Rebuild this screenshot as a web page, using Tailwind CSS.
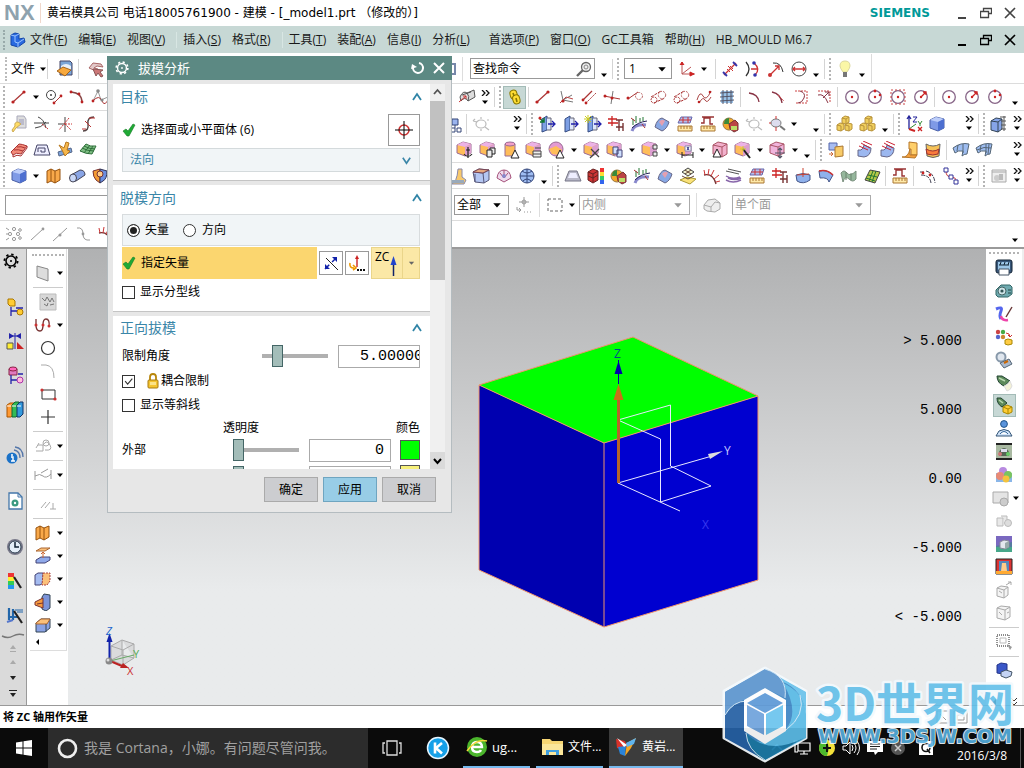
<!DOCTYPE html>
<html lang="zh-CN">
<head>
<meta charset="utf-8">
<title>NX - 建模 - _model1.prt</title>
<script src="https://cdn.jsdelivr.net/npm/@tailwindcss/browser@4"></script>
</head>
<body class="h-screen overflow-hidden flex flex-col bg-white text-black text-[12px] leading-4 font-['Open_Sans','Noto_Sans_CJK_SC',sans-serif] relative">

<svg class="hidden" aria-hidden="true">
<!-- sketch curves -->
<symbol id="line" viewBox="0 0 18 18"><path d="M3 14 14 4" stroke="#a33" fill="none" stroke-width="1.2"/><circle cx="3" cy="14" r="1.6" fill="#b22"/><circle cx="14" cy="4" r="1.6" fill="#b22"/></symbol>
<symbol id="circline" viewBox="0 0 18 18"><circle cx="6" cy="7" r="4.5" fill="none" stroke="#444"/><circle cx="6" cy="7" r="1" fill="#444"/><path d="M9 15 16 8" stroke="#a33"/><circle cx="9" cy="15" r="1.4" fill="#b22"/><circle cx="16" cy="8" r="1.4" fill="#b22"/></symbol>
<symbol id="arc" viewBox="0 0 18 18"><path d="M3 4Q14 5 14 14" stroke="#844" fill="none" stroke-width="1.3"/><circle cx="3" cy="4" r="1.4" fill="#b22"/><circle cx="11" cy="6" r="1.4" fill="#b22"/><circle cx="14" cy="14" r="1.4" fill="#b22"/></symbol>
<symbol id="spline" viewBox="0 0 18 18"><path d="M2 13 7 3 10 12 17 9" stroke="#999" fill="none"/><path d="M2 13Q8 6 11 13T18 9" stroke="#a33" fill="none"/><circle cx="7" cy="3" r="1.8" fill="#888"/><circle cx="2" cy="13" r="1.4" fill="#b22"/><circle cx="11" cy="12" r="1.6" fill="#888"/></symbol>
<symbol id="surf" viewBox="0 0 18 18"><path d="M2 9Q5 2 9 5L16 2 17 9 10 13Q7 8 3 13Z" fill="#ddd" stroke="#555"/><path d="M9 5Q12 8 10 13M4 7 13 4" stroke="#555" fill="none"/><path d="M1 14 8 8M5 8h3v3" stroke="#c33" fill="none"/></symbol>
<symbol id="chain" viewBox="0 0 18 18"><g fill="#fd3" stroke="#870"><rect x="4" y="2" width="7" height="9" rx="3.5" transform="rotate(-14 8 6)"/><rect x="7" y="7" width="7" height="9" rx="3.5" transform="rotate(-14 10 12)"/></g><path d="M7 5l1 3M10 10l1 4" stroke="#870" stroke-width="1.6"/></symbol>
<symbol id="angl" viewBox="0 0 18 18"><path d="M4 3 6 12 16 14M6 12 15 7" stroke="#777" fill="none"/><path d="M3 15 9 9 16 11" stroke="#b44" fill="none"/><circle cx="6" cy="13" r="1.6" fill="#b22"/></symbol>
<symbol id="par" viewBox="0 0 18 18"><path d="M3 12 12 3" stroke="#a33" stroke-width="1.3"/><path d="M6 15 16 5" stroke="#a33" stroke-dasharray="2 1"/><circle cx="3" cy="12" r="1.4" fill="#b22"/><circle cx="6" cy="15" r="1.4" fill="#b22"/></symbol>
<symbol id="perp" viewBox="0 0 18 18"><path d="M1 8 17 11" stroke="#a33"/><path d="M10 3 8 16" stroke="#777"/><circle cx="2" cy="8" r="1.5" fill="#b22"/><circle cx="9" cy="10" r="1.5" fill="#b22"/></symbol>
<symbol id="tan1" viewBox="0 0 18 18"><path d="M2 11 12 4" stroke="#a33"/><circle cx="13" cy="8" r="3.5" fill="none" stroke="#b66" stroke-dasharray="2 1"/><circle cx="2" cy="10" r="1.5" fill="#b22"/></symbol>
<symbol id="tan2" viewBox="0 0 18 18"><path d="M2 9 12 3M5 15 16 10" stroke="#a33" stroke-dasharray="3 1"/><circle cx="13" cy="7" r="3.7" fill="none" stroke="#b66" stroke-dasharray="2 1"/><circle cx="5" cy="12" r="3" fill="none" stroke="#a33" stroke-dasharray="2 1"/></symbol>
<symbol id="free" viewBox="0 0 18 18"><path d="M2 12Q5 2 8 8T16 3M4 15Q8 8 10 12T16 9" stroke="#a44" fill="none"/><circle cx="4" cy="14" r="1.3" fill="#b22"/><circle cx="15" cy="4" r="1.3" fill="#b22"/></symbol>
<symbol id="grid" viewBox="0 0 18 18"><path d="M3 3h12v12H3z" fill="#9bc4ea"/><path d="M5 2v14M9 2v14M13 2v14M2 5l14-1M2 9l14-1M2 13l14-1" stroke="#556" fill="none"/></symbol>
<symbol id="arcp" viewBox="0 0 18 18"><path d="M3 5Q12 6 13 14" stroke="#834" fill="none" stroke-width="1.3"/></symbol>
<symbol id="arcq" viewBox="0 0 18 18"><path d="M3 4Q12 6 13 15" stroke="#834" fill="none" stroke-width="1.3"/><path d="M9 7 15 13" stroke="#c44" stroke-dasharray="2 1"/></symbol>
<symbol id="dashc" viewBox="0 0 18 18"><path d="M3 3h12v12H3" stroke="#c44" stroke-dasharray="2 1" fill="none"/><path d="M8 3Q14 5 12 10T6 15" stroke="#834" fill="none"/></symbol>
<symbol id="dashd" viewBox="0 0 18 18"><path d="M3 3h12v12" stroke="#c44" stroke-dasharray="2 1" fill="none"/><path d="M3 7Q9 5 13 15M8 10 14 4M10 4h4v4" stroke="#834" fill="none"/></symbol>
<symbol id="ci" viewBox="0 0 18 18"><circle cx="9" cy="9" r="6.3" fill="none" stroke="#868" stroke-width="1.3"/><circle cx="9" cy="9" r="1.2" fill="#c22"/></symbol>
<symbol id="ci2" viewBox="0 0 18 18"><use href="#ci"/><circle cx="9" cy="3" r="1.4" fill="#c22"/><circle cx="14" cy="7" r="1.3" fill="#c22"/></symbol>
<symbol id="ci3" viewBox="0 0 18 18"><use href="#ci"/><path d="M2 2h14v14H2z" fill="none" stroke="#c44" stroke-dasharray="2 2"/></symbol>
<symbol id="ci4" viewBox="0 0 18 18"><use href="#ci"/><path d="M9 9 14 4M11 4h3v3" stroke="#c22" fill="none" stroke-width="1.3"/></symbol>
<symbol id="cpy" viewBox="0 0 18 18"><path d="M7 1h7l2 3v9H7z" fill="#ddd" stroke="#aab"/><path d="M9 4h5v6H9z" fill="#bbc"/><path d="M2 15 5 11Q4 7 8 7L11 9 6 13 3 17z" fill="#fd6" stroke="#ca5"/></symbol>
<symbol id="trim" viewBox="0 0 18 18"><path d="M5 2Q11 4 13 13M1 8h15M2 13Q8 13 13 7" stroke="#444" fill="none"/><path d="M9 9l6 5" stroke="#c33" stroke-dasharray="2 1"/></symbol>
<symbol id="xtrim" viewBox="0 0 18 18"><path d="M9 2v15M2 9h7" stroke="#444" fill="none"/><path d="M9 9h7M9 9l6 6M13 3 3 15" stroke="#c33" stroke-dasharray="2 1"/></symbol>
<symbol id="scrv" viewBox="0 0 18 18"><path d="M4 16Q10 16 9 9T15 2" stroke="#544" stroke-width="1.4" fill="none"/><path d="M6 6l6 6M10 3h6M3 14h4" stroke="#b33" fill="none"/></symbol>
<symbol id="greyl" viewBox="0 0 18 18"><g fill="none" stroke="#bbb" stroke-width="1.2"><ellipse cx="9" cy="9" rx="5" ry="4"/><path d="M1 6l4 1M1 6l2-2M13 12l4 3M9 2v2M9 14v2M15 5h2"/></g></symbol>
<symbol id="door" viewBox="0 0 18 18"><path d="M4 4 9 1v14l-5 2z" fill="#7d9fe4" stroke="#334a80"/><path d="M9 3h4v12H9" fill="#dde6fb" stroke="#667"/><path d="M10 9h7M14 6l3 3-3 3" stroke="#22a" fill="none" stroke-width="1.3"/></symbol>
<symbol id="doorg" viewBox="0 0 18 18"><use href="#door"/><path d="M1 3l5 4M6 3v4H2" stroke="#173" fill="none" stroke-width="1.5"/><circle cx="2" cy="3" r="1.5" fill="#c22"/></symbol>
<symbol id="doors" viewBox="0 0 18 18"><use href="#door"/><path d="M4 0v8M0 4h8M1 1l6 6M7 1 1 7" stroke="#cc2"/></symbol>
<symbol id="algn" viewBox="0 0 18 18"><path d="M1 4h9M1 8h10M5 1v10" stroke="#c22" fill="none" stroke-width="1.3"/><path d="M9 5h7M12 5v11M9 12h7M16 8v8" stroke="#733" fill="none" stroke-width="1.4"/></symbol>
<symbol id="hair" viewBox="0 0 18 18"><path d="M2 16Q4 9 16 10" stroke="#88c" stroke-width="3" fill="none"/><path d="M2 13Q8 7 17 6" stroke="#225" fill="none"/><path d="M3 10V4M6 8V1M10 7V3M13 6V2" stroke="#273"/><path d="M1 3l4 3M12 9l3 4" stroke="#a33"/></symbol>
<symbol id="blob" viewBox="0 0 18 18"><path d="M2 12Q4 4 9 3L16 7Q14 14 9 16Z" fill="#88a8e4" stroke="#668"/><path d="M6 7Q9 3 12 6L9 11Z" fill="#e4a0b0"/></symbol>
<symbol id="rul" viewBox="0 0 18 18"><path d="M2 11h14v5H2z" fill="#ffe9a8" stroke="#a73"/><path d="M5 11v3M8 11v3M11 11v3M14 11v3" stroke="#a73"/></symbol>
<symbol id="rula" viewBox="0 0 18 18"><use href="#rul"/><path d="M2 8 5 2h11l-2 6z" fill="#b4c0ee" stroke="#66a"/><path d="M3 5h12M7 2v6M12 2v6" stroke="#c33"/></symbol>
<symbol id="rulb" viewBox="0 0 18 18"><use href="#rul"/><path d="M2 8 5 8V3h6v6h3M3 2h12" stroke="#933" fill="none" stroke-width="1.4"/></symbol>
<symbol id="pac" viewBox="0 0 18 18"><circle cx="7" cy="9" r="6" fill="#f3a72b" stroke="#974"/><path d="M7 9V3Q2 3 2 9z" fill="#3a8a3a"/><path d="M7 9 13 5 16 8v7l-4 2-4-3z" fill="#b44" stroke="#733"/><path d="M9 11h6v4H9z" fill="#bd6"/></symbol>
<symbol id="zm" viewBox="0 0 18 18"><ellipse cx="8" cy="8" rx="5" ry="4" fill="#dde" stroke="#777"/><path d="M12 11l5 4" stroke="#777" stroke-width="2"/><path d="M8 1v3M8 12v4M1 8h2" stroke="#c33"/></symbol>
<symbol id="cubes" viewBox="0 0 18 18"><g fill="#f0cf5e" stroke="#b8923a"><path d="M6 3l3-2 4 1v5l-3 2-4-1z"/><path d="M1 10l3-2 4 1v5l-3 2-4-1z"/><path d="M9 10l3-2 4 1v5l-3 2-4-1z"/></g><path d="M6 3l4 1v5M10 4l3-2M1 10l4 1v5M9 10l4 1v5" stroke="#b8923a" fill="none"/></symbol>
<symbol id="axes" viewBox="0 0 18 18"><path d="M4 14V2M2 4l2-3 2 3" stroke="#229" fill="none" stroke-width="1.3"/><path d="M4 14l7-5" stroke="#383"/><path d="M4 14l6 2" stroke="#c22" stroke-width="2"/><path d="M8 2h4L8 7h4" stroke="#229" fill="none"/><path d="M13 6l2 3 2-3M15 9v2" stroke="#383" fill="none"/><path d="M13 12l4 4M17 12l-4 4" stroke="#c22" stroke-width="1.3"/></symbol>
<symbol id="bcube" viewBox="0 0 18 18"><path d="M2 5 8 2l8 2v9l-6 3-8-3z" fill="#7f9ae6" stroke="#4a5fa4"/><path d="M2 5 8 2l8 2-6 3z" fill="#bccdfa"/><path d="M10 7 16 4v9l-6 3z" fill="#4d6fd0"/></symbol>
<symbol id="bcarr" viewBox="0 0 18 18"><path d="M1 6 6 3l6 1v10l-4 3-7-2z" fill="#86a4e8" stroke="#345"/><path d="M1 6l7 1 4-3M8 7v10" stroke="#345" fill="none"/><path d="M10 2h6M11 6h5M11 10h5M11 14h5M14 1v15" stroke="#555"/></symbol>
<!-- synchronous modelling: a cube with a small badge -->
<symbol id="pc" viewBox="0 0 18 18"><path d="M1 4 7 1l8 2v9l-6 3-8-3z" fill="#ffbd59" stroke="#9a6a94"/><path d="M1 4 7 1l8 2-6 3z" fill="#ecb2e6"/><path d="M9 6 15 3v9l-6 3z" fill="#dc9ed0"/></symbol>
<symbol id="pc1" viewBox="0 0 18 18"><use href="#pc"/><path d="M12 6v11M8 13q4 5 8 0M10 9h4" stroke="#222" fill="none" stroke-width="1.2"/></symbol>
<symbol id="pc2" viewBox="0 0 18 18"><use href="#pc"/><path d="M8 9h5v7H8zM11 9V7h5v6h-3" fill="#eee" stroke="#222"/></symbol>
<symbol id="pc3" viewBox="0 0 18 18"><path d="M3 3h10v12H3z" fill="#ffbd59" stroke="#9a6a94"/><ellipse cx="8" cy="3" rx="5" ry="2" fill="#f2a0c8" stroke="#9a6a94"/><path d="M13 9l4 8H9z" fill="#fff" stroke="#222"/></symbol>
<symbol id="pc4" viewBox="0 0 18 18"><use href="#pc"/><path d="M8 10h8v6H8zM10 7h6M8 13h8" fill="#eee" stroke="#444"/></symbol>
<symbol id="pc5" viewBox="0 0 18 18"><circle cx="8" cy="8" r="7" fill="#e39ad2" stroke="#9a6a94"/><path d="M1 8l7-3 6 4-3 5-7-1z" fill="#ffbd59"/><path d="M12 9l4 8H8z" fill="#fff" stroke="#222"/></symbol>
<symbol id="pc6" viewBox="0 0 18 18"><use href="#pc"/><path d="M8 8l8 8M16 8l-9 9" stroke="#444" stroke-width="1.3"/></symbol>
<symbol id="pc7" viewBox="0 0 18 18"><use href="#pc"/><path d="M7 6h5v7H7zM11 9h5v7h-5z" fill="#cfe0ff" stroke="#447"/></symbol>
<symbol id="pc8" viewBox="0 0 18 18"><use href="#pc"/><path d="M12 4h4v4h-4zM12 11h4v4h-4z" fill="#eee" stroke="#444"/></symbol>
<symbol id="pc9" viewBox="0 0 18 18"><use href="#pc"/><path d="M6 14h11M6 11v6M17 11v6" stroke="#222" fill="none"/><path d="M9 5h6v5H9z" fill="#fff" stroke="#88a"/><path d="M11 6l2 3M13 6l-2 3" stroke="#338"/></symbol>
<symbol id="pca" viewBox="0 0 18 18"><path d="M2 4 7 1l9 2v10l-5 3-9-3z" fill="#f2b0cc" stroke="#a56"/><path d="M2 4l9 2v10M11 6l5-3" stroke="#a56" fill="none"/><path d="M6 8l4 8H2z" fill="#fff" stroke="#222"/></symbol>
<symbol id="pcb" viewBox="0 0 18 18"><use href="#pc"/><path d="M9 8l7 9" stroke="#222" stroke-width="2"/><path d="M9 5v5M6 8h6" stroke="#cc3"/></symbol>
<symbol id="pcc" viewBox="0 0 18 18"><path d="M1 4 7 1l8 2v9l-6 3-8-3z" fill="#f0b4dc" stroke="#a56"/><path d="M1 4l8 2v9M9 6l6-3" stroke="#a56" fill="none"/><path d="M11 7v10M6 12h10M9 9l2-2 2 2M9 15l2 2 2-2" stroke="#556" fill="none" stroke-width="1.2"/></symbol>
<symbol id="rsurf" viewBox="0 0 18 18"><path d="M1 11 9 3q3 0 8 2l-6 8q-5-2-8 1z" fill="#f28a78" stroke="#a33"/><path d="M3 14v2q4-3 8-1l6-8V5M4 9q4-1 9 1M7 6q4-1 8 1" stroke="#a33" fill="none"/></symbol>
<symbol id="trp" viewBox="0 0 18 18"><path d="M4 4h10l3 10H1z" fill="#eef" stroke="#446"/><path d="M5 11V7h7v4H8V9" fill="none" stroke="#446"/></symbol>
<symbol id="oarr" viewBox="0 0 18 18"><path d="M2 11 15 7l1 4-13 4z" fill="#7aa2d8" stroke="#568"/><path d="M3 4 8 7 10 1l3 1-2 7 3 1-5 5-3-6z" fill="#f5b74c" stroke="#b87820"/></symbol>
<symbol id="ggrid" viewBox="0 0 18 18"><path d="M1 10 7 3q4 3 10 2l-4 8q-6 0-12-3z" fill="#7fbf84" stroke="#2f6f3a"/><path d="M3 7q5 3 12 3M5 5q5 3 11 3M5 12l6-8M9 13l5-8" stroke="#2f6f3a" fill="none"/></symbol>
<symbol id="swap" viewBox="0 0 18 18"><path d="M2 2h8v7H2z" fill="#a8bdf2" stroke="#56a"/><path d="M8 6l8-1v10l-8 1z" fill="#f8cb68" stroke="#a73"/><path d="M2 13h4M4 11l2 2-2 2" stroke="#c63" fill="none"/></symbol>
<symbol id="sht" viewBox="0 0 18 18"><path d="M3 9q5 1 6-5l7 3q0 8-7 9l-6-1z" fill="#9cb8f0" stroke="#668"/><path d="M6 2l9 5M4 5l9 4M8 0l9 4" stroke="#c23"/></symbol>
<symbol id="fold" viewBox="0 0 18 18"><path d="M8 1l8 1v12h-6V8H8z" fill="#ffcf6a" stroke="#b5762a"/><path d="M1 16q6 1 8-8v6h7l-2 3z" fill="#f6a13c" stroke="#b5762a"/></symbol>
<symbol id="band" viewBox="0 0 18 18"><path d="M2 3q7 4 14 0l-1 12q-6 3-12 0z" fill="#f6c258" stroke="#666"/><path d="M2 8q7 4 13 0l-1 5q-5 2-11 0z" fill="#fa7b3c" stroke="#933"/></symbol>
<symbol id="bsf" viewBox="0 0 18 18"><path d="M1 7q8-6 16-4l-2 10q-3 0-5 2l1-5q-5-1-8 2z" fill="#9dbcf0" stroke="#567"/><path d="M6 4l-1 6M11 3v9" stroke="#567"/></symbol>
<symbol id="bsg" viewBox="0 0 18 18"><use href="#bsf"/><path d="M2 9q7-4 14-2M14 3l-1 10" stroke="#567" fill="none"/></symbol>
<symbol id="book" viewBox="0 0 18 18"><path d="M2 4l4-2 4 2 5-2v11l-5 3-4-2-4 2z" fill="#f9a94a" stroke="#96530f"/><path d="M6 2v12M10 4v12" stroke="#96530f"/></symbol>
<symbol id="tube" viewBox="0 0 18 18"><path d="M3 8 12 3q5 0 5 5l-9 6q-5 1-5-6z" fill="#89a5e6" stroke="#445"/><ellipse cx="5" cy="11" rx="3.5" ry="4" fill="#c9d7f7" stroke="#445"/></symbol>
<symbol id="half" viewBox="0 0 18 18"><path d="M2 4 9 2v14l-4-3q-3-3-3-9z" fill="#f49b33" stroke="#733"/><path d="M9 2l7 2q0 8-4 10l-3 2z" fill="#6c8fe0" stroke="#335"/><circle cx="9" cy="7" r="3" fill="#fc8" stroke="#733"/></symbol>
<symbol id="yf" viewBox="0 0 18 18"><path d="M9 2h4v8l4 3-2 4H2q6-1 7-15z" fill="#f8c96c" stroke="#88a"/><path d="M3 13h12v3H3z" fill="#9ab" /></symbol>
<symbol id="cedge" viewBox="0 0 18 18"><path d="M1 5l6-3 10 1v10l-5 3-9-1z" fill="#b4c6f2" stroke="#557"/><path d="M1 5l10 1 6-3M11 6l1 10M3 7v8" stroke="#557" fill="none"/><path d="M1 5l6-3 10 1-6 3z" fill="#e5a880" stroke="#745"/></symbol>
<symbol id="dome" viewBox="0 0 18 18"><path d="M2 11Q3 3 9 3t7 8l-7 4z" fill="#efdbee" stroke="#a5527a"/><path d="M9 3v8M5 6l4 5 4-5" stroke="#a5527a" fill="none"/><circle cx="9" cy="9" r="2" fill="#88c"/></symbol>
<symbol id="globe" viewBox="0 0 18 18"><circle cx="9" cy="9" r="7" fill="#9ebcf2" stroke="#347"/><path d="M2 9h14M9 2v14M4 4q5 4 10 0M5 14q4-4 8 0" stroke="#347" fill="none"/></symbol>
<symbol id="tpz" viewBox="0 0 18 18"><path d="M5 4h8l4 10H1z" fill="#b8b8c8" stroke="#778"/><path d="M6 6h6l2 5H4z" fill="#eef"/></symbol>
<symbol id="rain" viewBox="0 0 18 18"><path d="M1 5l5-3 5 2v9l-5 3-5-3z" fill="#c33" stroke="#622"/><path d="M1 5l5 2 5-3M6 7v8M1 9l5 2 5-3" stroke="#622" fill="none"/><path d="M13 1h4v4h-4z" fill="#e33"/><path d="M13 5h4v4h-4z" fill="#fd3"/><path d="M13 9h4v4h-4z" fill="#3c6"/><path d="M13 13h4v4h-4z" fill="#36e"/></symbol>
<symbol id="lay" viewBox="0 0 18 18"><path d="M1 13l7-3 9 2-6 5z" fill="#fbe27a" stroke="#a93"/><path d="M9 1l6 4-6 4-6-4z" fill="#eec" stroke="#444"/><path d="M3 9l6 3 6-3M6 3l6 4M12 3 6 7" stroke="#643" fill="none"/></symbol>
<symbol id="comb" viewBox="0 0 18 18"><path d="M2 8q9-2 12 9" stroke="#733" fill="none" stroke-width="1.3"/><path d="M3 8 2 3M6 8 7 2M9 9l3-6M12 12l5-4M14 15l4-1" stroke="#c33"/></symbol>
<symbol id="strp" viewBox="0 0 18 18"><path d="M1 4l13 3M3 2l13 3" stroke="#555"/><path d="M1 9q6 4 14 1M1 13q7 4 15 0M3 11q7 3 13 0" stroke="#86a" fill="none" stroke-width="1.5"/></symbol>
<symbol id="cup" viewBox="0 0 18 18"><path d="M2 8q7-3 14 0v5q-7 5-13 1z" fill="#8fb1ec" stroke="#458"/><path d="M9 1v9M3 8l12-1" stroke="#c43" fill="none"/></symbol>
<symbol id="bfold" viewBox="0 0 18 18"><path d="M2 4q8-2 14 4l-4 7q-1-5-9-4z" fill="#8fb1ec" stroke="#458"/><path d="M2 4q8-2 14 4" stroke="#c33" fill="none" stroke-width="1.6"/></symbol>
<symbol id="gfold" viewBox="0 0 18 18"><path d="M1 6q3-4 6 0t9-2v8q-3 4-7 0t-6 3z" fill="#95b79c" stroke="#7a8f7e"/><path d="M6 5v8M11 6v7" stroke="#6b846f"/></symbol>
<symbol id="gg2" viewBox="0 0 18 18"><path d="M2 13 7 3l10 2-5 11z" fill="#b7c84a" stroke="#444"/><path d="M5 8l9 2M3 11l9 3M10 4 6 14M13 4 9 15" stroke="#273" fill="none"/></symbol>
<symbol id="arcs" viewBox="0 0 18 18"><path d="M1 5h4M7 4q8 2 9 12M2 8q9 0 10 8" stroke="#445" fill="none" stroke-dasharray="4 1"/><circle cx="4" cy="6" r="1.4" fill="#c22"/><circle cx="11" cy="8" r="1.4" fill="#c22"/></symbol>
<symbol id="node" viewBox="0 0 18 18"><path d="M4 4q0 6 5 6t5 4" stroke="#c33" fill="none"/><path d="M2 1h4v4H2zM7 8h4v4H7zM12 13h4v4h-4z" fill="#fff" stroke="#339"/></symbol>
<symbol id="gbox" viewBox="0 0 18 18"><path d="M2 3h14v12H2z" fill="#eee" stroke="#aaa"/><path d="M2 5h14" stroke="#aaa"/><circle cx="7" cy="11" r="3" fill="#ccc"/><path d="M9 7h4v6H9z" fill="#bbb"/></symbol>
<symbol id="part" viewBox="0 0 18 18"><path d="M8 4h6v6H8z" fill="#9ab4ee" stroke="#347"/><path d="M11 10v3M13 13h4v4h-4zM7 13h4v4H7z" fill="none" stroke="#347"/></symbol>
<!-- greyed snap tools -->
<symbol id="g1" viewBox="0 0 18 18"><g fill="none" stroke="#999"><circle cx="9" cy="4" r="1.6"/><circle cx="9" cy="14" r="1.6"/><circle cx="5" cy="9" r="1.6"/><circle cx="13" cy="9" r="1.6"/><circle cx="15" cy="5" r="1.3"/><circle cx="15" cy="13" r="1.3"/><path d="M1 3l3 2M1 15l3-2M1 9h2"/></g></symbol>
<symbol id="g2" viewBox="0 0 18 18"><path d="M3 15 15 4" stroke="#999"/><circle cx="15" cy="4" r="1.4" fill="#999"/></symbol>
<symbol id="g3" viewBox="0 0 18 18"><path d="M2 16 16 3" stroke="#999"/><circle cx="9" cy="10" r="1.5" fill="#999"/></symbol>
<symbol id="g4" viewBox="0 0 18 18"><path d="M3 3q6-1 6 6t7 6" stroke="#999" fill="none"/><circle cx="9" cy="9" r="1.4" fill="#999"/></symbol>
<!-- standard bar -->
<symbol id="open" viewBox="0 0 18 18"><path d="M4 1h10l2 2v12H4z" fill="#7ba6d8" stroke="#446"/><path d="M5 6q5-4 10 0v4H5z" fill="#e8f0fa"/><path d="M1 11l6-4 8 3-6 6z" fill="#f8a93e" stroke="#a5641a"/></symbol>
<symbol id="undo" viewBox="0 0 18 18"><path d="M2 8 6 3l8 1 2 3-6-1-3 2 4 1-2 2z" fill="#e2c8c8" stroke="#a66"/><path d="M6 9l10 1-3 2 3 4-2 1-3-4-2 3z" fill="#c77" stroke="#855"/></symbol>
<symbol id="bulb" viewBox="0 0 18 18"><path d="M9 1q5 0 5 5 0 2-3 6H7Q4 8 4 6q0-5 5-5z" fill="#fbf7a6" stroke="#dcd8a0"/><path d="M7 12h4v5H7z" fill="#777"/></symbol>
<symbol id="wcs" viewBox="0 0 18 18"><path d="M4 2v12h13M4 14l9-7" stroke="#b55" fill="none"/><path d="M2 5l2-3 2 3M12 12l4 2-4 2z" fill="#c22" stroke="#c22"/></symbol>
<symbol id="m1" viewBox="0 0 18 18"><path d="M3 15 15 3" stroke="#c33" stroke-width="1.3"/><path d="M2 12l4 4M12 2l4 4" stroke="#33a" stroke-width="1.8"/><path d="M7 6l5 5M6 9l3 3M9 6l3 3" stroke="#c33"/></symbol>
<symbol id="m2" viewBox="0 0 18 18"><path d="M2 2q6 7 0 14" stroke="#333" fill="none" stroke-width="1.3"/><path d="M10 3q7 6 1 12M7 9h7" stroke="#c33" fill="none" stroke-width="1.3"/><circle cx="10" cy="3" r="1.8" fill="#33a"/><circle cx="11" cy="15" r="1.8" fill="#33a"/></symbol>
<symbol id="m3" viewBox="0 0 18 18"><path d="M6 3q8-1 10 9" stroke="#333" fill="none"/><path d="M3 15 12 6M8 6h4v4" stroke="#c33" fill="none" stroke-width="1.3"/><circle cx="3" cy="15" r="2" fill="#c33"/></symbol>
<symbol id="m4" viewBox="0 0 18 18"><circle cx="9" cy="9" r="7" fill="none" stroke="#444"/><path d="M3 9h12M5 7 3 9l2 2M13 7l2 2-2 2" stroke="#c33" fill="none" stroke-width="1.3"/></symbol>
<!-- resource bar -->
<symbol id="gear" viewBox="0 0 18 18"><circle cx="9" cy="9" r="5" fill="none" stroke="currentColor" stroke-width="1.6"/><circle cx="9" cy="9" r="6.6" fill="none" stroke="currentColor" stroke-width="1.8" stroke-dasharray="2.4 2.78"/><circle cx="9" cy="9" r="1" fill="currentColor"/></symbol>
<symbol id="r1" viewBox="0 0 18 18"><g fill="#fc3" stroke="#a70"><path d="M2 1h5l2 2v5H4L2 6z"/><circle cx="14" cy="14" r="3"/></g><path d="M5 9v9M5 13h6M10 10h7" stroke="#22a" stroke-width="1.3"/></symbol>
<symbol id="r2" viewBox="0 0 18 18"><path d="M3 1v6l5-3zM15 1v6l-5-3z" fill="#22a"/><path d="M9 1v16M3 4h12" stroke="#22a"/><path d="M1 11h6v6H1z" fill="#fe3" stroke="#555"/><path d="M11 10v7h7z" fill="#c22"/></symbol>
<symbol id="r3" viewBox="0 0 18 18"><path d="M3 3h8v6H3z" fill="#e07ac0" stroke="#824"/><ellipse cx="7" cy="3" rx="4" ry="2" fill="#f6b" stroke="#824"/><path d="M5 9v9M5 14h6M12 8h5" stroke="#22a" stroke-width="1.3"/><circle cx="14" cy="14" r="3" fill="#fbd" stroke="#a3a"/></symbol>
<symbol id="r4" viewBox="0 0 18 18"><path d="M1 5l3-2h4v12l-3 2H1z" fill="#f93" stroke="#a50"/><path d="M6 5l3-3h4v12l-3 3H6z" fill="#3b5" stroke="#163"/><path d="M11 5l3-3h3v12l-3 3h-3z" fill="#39d" stroke="#136"/><path d="M1 6h4M6 6h4M11 6h4" stroke="#fff"/></symbol>
<symbol id="r5" viewBox="0 0 18 18"><circle cx="6" cy="12" r="5.5" fill="#1b72c8"/><path d="M5 11h2v4M5 15h4" stroke="#fff" stroke-width="1.4" fill="none"/><circle cx="6" cy="9" r="1" fill="#fff"/><path d="M8 4q6 1 6 8M9 1q8 1 8 10" stroke="#57a" fill="none" stroke-width="1.3"/></symbol>
<symbol id="r6" viewBox="0 0 18 18"><path d="M3 1h9l4 4v12H3z" fill="#fff" stroke="#47a" stroke-width="1.3"/><path d="M12 1v4h4" fill="none" stroke="#47a"/><circle cx="9" cy="11" r="3.5" fill="#3a9a80"/><circle cx="9" cy="11" r="1.2" fill="#fff"/></symbol>
<symbol id="r7" viewBox="0 0 18 18"><circle cx="9" cy="9" r="8" fill="#778" /><circle cx="9" cy="9" r="6" fill="#e4eef8" stroke="#345"/><path d="M9 4v5h4" stroke="#123" fill="none" stroke-width="1.5"/></symbol>
<symbol id="r8" viewBox="0 0 18 18"><path d="M2 1h6v4H2z" fill="#e33"/><path d="M2 5h6v4H2z" fill="#fe3"/><path d="M2 9h6v4H2z" fill="#3c5"/><path d="M2 13h6v4H2z" fill="#29e"/><path d="M8 5l7 11" stroke="#222" stroke-width="2.2"/></symbol>
<symbol id="r9" viewBox="0 0 18 18"><path d="M3 2v12M7 3v11M2 11h10" stroke="#26a" stroke-width="2.2"/><path d="M9 4h8M11 6h6" stroke="#26a"/><path d="M8 5l8 12" stroke="#222" stroke-width="2.2"/><path d="M1 16l6-2" stroke="#57c" stroke-width="2"/></symbol>
<!-- left palette -->
<symbol id="pln" viewBox="0 0 18 18"><path d="M3 2l11 3v12L3 13z" fill="#ddd" stroke="#888"/></symbol>
<symbol id="tex" viewBox="0 0 18 18"><path d="M1 1h16v16H1z" fill="#d8d8d8" stroke="#bbb"/><path d="M3 5l3 3 2-4 3 5 2-4 2 4M5 11l3 2 1-3M11 12l4-1" stroke="#777" fill="none"/></symbol>
<symbol id="ucrv" viewBox="0 0 18 18"><path d="M2 3v6q0 6 4 6 3 0 3-6t3-6q4 0 3 8" stroke="#733" fill="none" stroke-width="1.3"/><circle cx="2" cy="9" r="1.5" fill="#c33"/><circle cx="9" cy="9" r="1.5" fill="#c33"/><circle cx="15" cy="10" r="1.5" fill="#c33"/></symbol>
<symbol id="circ" viewBox="0 0 18 18"><circle cx="9" cy="9" r="6.5" fill="none" stroke="#333" stroke-width="1.2"/></symbol>
<symbol id="flt" viewBox="0 0 18 18"><path d="M2 3h5q8 1 8 13" fill="none" stroke="#aaa"/></symbol>
<symbol id="rect" viewBox="0 0 18 18"><path d="M3 5h13v9H3z" fill="none" stroke="#333"/><circle cx="3" cy="5" r="1.6" fill="#c33"/><circle cx="16" cy="14" r="1.6" fill="#c33"/></symbol>
<symbol id="plus" viewBox="0 0 18 18"><path d="M9 2v14M2 9h14" stroke="#333" stroke-width="1.2"/></symbol>
<symbol id="p1" viewBox="0 0 18 18"><g fill="none" stroke="#aaa"><path d="M2 14h7V8q4-6 7 0t-5 5M4 8h5M2 11l3-5"/><circle cx="12" cy="6" r="3"/></g></symbol>
<symbol id="p2" viewBox="0 0 18 18"><path d="M1 5v9M17 4v9M1 10q5-3 8 0t8-2M7 7l7-4" stroke="#999" fill="none"/></symbol>
<symbol id="p3" viewBox="0 0 18 18"><path d="M2 13l5-6M6 13l5-6M11 14h6M14 8v6" stroke="#aaa"/></symbol>
<symbol id="q2" viewBox="0 0 18 18"><path d="M2 4l5-3h9l-5 3z" fill="#fbc07a" stroke="#a63"/><path d="M2 13l5-3h9v3l-5 3H2z" fill="#8fa9ea" stroke="#447"/><path d="M9 5v6M7 7l2-2 2 2" stroke="#c63" fill="none"/></symbol>
<symbol id="q3" viewBox="0 0 18 18"><path d="M1 5l3-2h5v10l-3 2H1z" fill="#a4bbf0" stroke="#447"/><path d="M9 3h7v8l-3 4H8z" fill="#fbc07a" stroke="#a44" stroke-dasharray="2 1"/></symbol>
<symbol id="q4" viewBox="0 0 18 18"><path d="M8 4l2-3 6 1v13l-4 3-4-2z" fill="#7c94d8" stroke="#345"/><path d="M1 9l8-4v10l-8-3z" fill="#f6993c" stroke="#733"/><path d="M3 11l6-1" stroke="#733"/></symbol>
<symbol id="q5" viewBox="0 0 18 18"><path d="M2 7l5-4h9v9l-5 4H2z" fill="#8aa2e4" stroke="#345"/><path d="M2 7l5-4h9l-3 5H2z" fill="#fbc07a" stroke="#a63"/><path d="M12 8v8" stroke="#345"/></symbol>
<!-- right palette -->
<symbol id="v1" viewBox="0 0 18 18"><rect x="1" y="1" width="16" height="13" rx="2" fill="#38577a" stroke="#123"/><path d="M3 3h12v8H3z" fill="#9cc6e6"/><path d="M4 6h10M6 3l-1 3M10 3 9 6M14 3l-1 3" stroke="#123"/><path d="M4 10h10v6H4z" fill="#fff" stroke="#456"/></symbol>
<symbol id="v2" viewBox="0 0 18 18"><path d="M1 8l5-5h9l2 2v7l-4 3H3l-2-2z" fill="#6faab0" stroke="#366"/><circle cx="7" cy="9" r="4" fill="#cfe4e8" stroke="#466"/><circle cx="7" cy="9" r="1.6" fill="#355"/><path d="M13 8h3M13 11h3" stroke="#244"/></symbol>
<symbol id="v3" viewBox="0 0 18 18"><path d="M1 4q7-3 5 2t0 8" stroke="#56e" fill="none" stroke-width="3"/><path d="M6 11q1 5 7 4" stroke="#e4a" fill="none" stroke-width="2.5"/><path d="M17 2 11 12" stroke="#633" stroke-width="1.4"/></symbol>
<symbol id="v4" viewBox="0 0 18 18"><circle cx="3" cy="4" r="2.2" fill="#c44"/><circle cx="8" cy="4" r="2.2" fill="#4a4"/><circle cx="3" cy="9" r="2.2" fill="#56c"/><circle cx="8" cy="9" r="2.2" fill="#c83"/><path d="M11 5q4 0 4 4M13 7l2 2 2-2" stroke="#c33" fill="none"/><path d="M10 12l3-1 4 1v4l-4 1-3-1z" fill="#fc4" stroke="#a80"/></symbol>
<symbol id="v5" viewBox="0 0 18 18"><circle cx="6" cy="6" r="4.500" fill="#dfe6ee" stroke="#89a" stroke-width="2"/><path d="M5 12l9-4 3 5-8 4z" fill="#a9b8cc" stroke="#567"/><path d="M9 12l4-2" stroke="#c60" stroke-width="2"/></symbol>
<symbol id="v6" viewBox="0 0 18 18"><path d="M2 2h5l8 5-6 5q-7-3-7-10z" fill="#5d8a5a" stroke="#243"/><path d="M9 12q4-1 6-5l2 5q-1 4-5 5z" fill="#f4f2d8" stroke="#ddd"/><path d="M4 4l6 3" stroke="#b8d8b0" stroke-width="1.500"/></symbol>
<symbol id="v7" viewBox="0 0 18 18"><path d="M2 1h4l6 5-5 4q-5-3-5-9z" fill="#5d8a5a" stroke="#243"/><path d="M4 3l4 3" stroke="#b8d8b0" stroke-width="1.500"/><path d="M8 10l4-2 5 2v5l-4 2-5-2z" fill="#fc3" stroke="#a80"/><path d="M8 10l5 2v5M13 12l4-2" stroke="#a80" fill="none"/></symbol>
<symbol id="v8" viewBox="0 0 18 18"><circle cx="9" cy="4" r="3.400" fill="#5a94dc" stroke="#258"/><path d="M1 16l3-5q5-3 10 0l3 5z" fill="#cfe2f8" stroke="#357"/><path d="M5 14q4-5 8 0" fill="#fff" stroke="#369"/></symbol>
<symbol id="v9" viewBox="0 0 18 18"><path d="M1 1h16v16H1z" fill="#a9b9a2"/><path d="M1 1h16M1 16h16" stroke="#222" stroke-width="2"/><path d="M4 9q5-8 10 0v4H4z" fill="#565"/><path d="M6 6h6v3H6z" fill="#dde"/><circle cx="5" cy="11" r="2" fill="#c77"/><circle cx="13" cy="11" r="2" fill="#6c6"/></symbol>
<symbol id="va" viewBox="0 0 18 18"><path d="M1 7h16v9H1z" fill="#8ab6e8"/><circle cx="8" cy="5" r="4" fill="#b88ae0"/><circle cx="5" cy="10" r="4" fill="#e88a75"/><circle cx="13" cy="9" r="4" fill="#7ac45f"/><circle cx="11" cy="13" r="3.400" fill="#f4c33c"/></symbol>
<symbol id="vb" viewBox="0 0 18 18"><path d="M1 3h15v11H1z" fill="#e4e4e4" stroke="#aaa"/><circle cx="12" cy="13" r="4" fill="#ccc" stroke="#aaa"/></symbol>
<symbol id="vc" viewBox="0 0 18 18"><path d="M2 6h6v8H2zM6 4h6v8" fill="#e8e8e8" stroke="#bbb"/><circle cx="13" cy="11" r="3.500" fill="#ddd" stroke="#bbb"/></symbol>
<symbol id="vd" viewBox="0 0 18 18"><path d="M1 1h16v16H1z" fill="#567aa0"/><path d="M1 1h16v6L1 11z" fill="#7a68c0"/><path d="M1 12h16v5H1z" fill="#47a78a"/><path d="M5 7l4-2 5 1v6l-4 2-5-1z" fill="#e4e8ee" stroke="#889"/><path d="M10 8l4-2v6l-4 2z" fill="#9aa"/></symbol>
<symbol id="ve" viewBox="0 0 18 18"><path d="M1 1h16v15H1z" fill="#d33" stroke="#222"/><path d="M4 3h10v10H4z" fill="#58b"/><path d="M7 5h4l1 8H6z" fill="#fc8"/><path d="M1 13h16v3H1z" fill="#fa3"/></symbol>
<symbol id="vf" viewBox="0 0 18 18"><g fill="#f4f4f4" stroke="#aaa"><path d="M2 7l4-2 7 1v8l-4 3-7-2z"/><path d="M2 7l7 2v8M9 9l4-3M11 4l5-3M13 1h3v3M4 10l3 2" fill="none"/></g></symbol>
<symbol id="vg" viewBox="0 0 18 18"><g fill="#f4f4f4" stroke="#aaa"><path d="M2 4l4-2 9 1v10l-5 3-8-2z"/><path d="M2 4l8 2v10M10 6l5-3M4 8l3 3M12 9l2-1" fill="none"/></g></symbol>
<symbol id="vh" viewBox="0 0 18 18"><path d="M2 2h12v11H2z" fill="#fff" stroke="#666" stroke-dasharray="1 1" stroke-width="1.400"/><path d="M5 5h6v5H5z" fill="none" stroke="#bbb"/><path d="M12 11l5 3-2 3z" fill="#999"/></symbol>
<symbol id="vi" viewBox="0 0 18 18"><path d="M2 3l4-2 6 1v8l-4 2-6-1z" fill="#3a57c8" stroke="#238"/><path d="M6 10l5-2 6 2-1 4-5 2-5-2z" fill="#c4d3f4" stroke="#456"/></symbol>
<symbol id="chk" viewBox="0 0 14 14"><path d="M1 8l3-2 2 2 5-7 2 1-6 11H5z" fill="#1faa35" stroke="#157a25" stroke-width=".6"/></symbol>
<symbol id="up" viewBox="0 0 12 12"><path d="M2 9 6 3l4 6" fill="none" stroke="currentColor" stroke-width="1.800"/></symbol>
<symbol id="dn" viewBox="0 0 12 12"><path d="M2 3l4 6 4-6" fill="none" stroke="currentColor" stroke-width="1.800"/></symbol>
<symbol id="tri" viewBox="0 0 8 6"><path d="M1 1.500h6L4 5z" fill="currentColor"/></symbol>
</svg>

<!-- title bar -->
<header class="h-[26px] shrink-0 flex items-center pl-1">
  <span class="w-[37px] border-r border-[#f0d8cc] text-[22px] leading-5 font-bold text-[#8ea2ae] font-['Liberation_Sans',sans-serif]">NX</span>
  <h1 class="ml-[6px] whitespace-nowrap font-['DejaVu_Sans','Noto_Sans_CJK_SC',sans-serif]">黄岩模具公司 电话18005761900 - 建模 - [_model1.prt （修改的）]</h1>
  <span class="ml-auto text-[12px] font-bold text-[#099] font-['DejaVu_Sans',sans-serif]">SIEMENS</span>
  <div class="ml-[26px] mr-2 flex gap-3 text-[#444]" data-win></div>
</header>

<!-- menu bar -->
<nav class="h-[27px] shrink-0 bg-[#c7d8d5] flex items-center text-[#1a1a1a] whitespace-nowrap">
  <span class="ml-[3px] mr-[3px] h-5 border-l-2 border-dotted border-[#9aa]"></span>
  <svg class="w-[18px] h-[18px] mr-1" viewBox="0 0 18 18"><path d="M3 4l4-2 4 1v5l5-1 1 4-7 5-7-2z" fill="#2a6ae0" stroke="#1547a8"/><path d="M3 4l4 1v6l3 1v4M7 5l4-2M10 12l6-4" stroke="#9cc4ff" fill="none"/></svg>
  <div class="flex" data-menu></div>
  <div class="ml-auto mr-2 flex gap-3 text-black" data-win></div>
</nav>

<!-- standard bar -->
<div class="h-[31px] shrink-0 flex items-stretch border-b border-[#dcdcdc] pt-px">
  <div class="w-[441px] shrink-0 flex items-center pl-px">
    <span class="w-[10px] flex justify-center h-6"><i class="border-l-2 border-dotted border-[#bbb]"></i></span>
    <button type="button" class="flex items-center gap-1 w-[34px]"><span class="whitespace-nowrap">文件</span><svg class="w-2 h-[6px] shrink-0"><use href="#tri"/></svg></button>
    <div class="flex items-center" data-tools="| s3 open | s3 undo"></div>
  </div>
  <div class="flex items-center border-r border-[#dcdcdc]">
    <span class="w-[15px] h-3 border-2 border-[#78a] mr-[6px]"></span>
    <span class="h-6 border-l border-[#ddd] mr-[7px]"></span>
    <label class="w-[125px] h-[21px] border border-[#999] flex items-center px-[2px]"><input aria-label="查找命令" value="查找命令" class="w-0 flex-1 outline-none bg-transparent"><svg class="w-4 h-4 shrink-0" viewBox="0 0 16 16"><circle cx="10" cy="6" r="4.500" fill="#eee" stroke="#666" stroke-width="1.300"/><path d="M7 9l-6 6" stroke="#666" stroke-width="2.400"/><circle cx="10" cy="6" r="2" fill="none" stroke="#888"/></svg></label>
    <div class="flex items-center" data-tools="s3 w | g s3"></div>
    <label class="w-[48px] h-[21px] border border-[#999] flex items-center px-1"><select aria-label="图层" class="appearance-none w-0 flex-1 outline-none"><option>1</option></select><svg class="w-[10px] h-2"><use href="#tri"/></svg></label>
    <div class="flex items-center" data-tools="s3 wcs v s3 | m1 m2 m3 m4 w | g bulb w s3"></div>
  </div>
</div>

<div class="flex shrink-0 h-[27px] border-b border-[#dcdcdc]"><div class="flex items-center w-[441px] shrink-0 pl-px" data-tools="g line v circline arc spline"></div><div class="flex items-center flex-1" data-tools="s14 surf c | g !chain | line angl par perp tan1 tan2 tan2 free grid | arcp arcq dashc dashd | ci ci2 ci3 ci4 | ci ci4 ci2 s3 w"></div></div>
<div class="flex shrink-0 h-[26px] border-b border-[#dcdcdc]"><div class="flex items-center w-[441px] shrink-0 pl-px" data-tools="g cpy trim xtrim scrv"></div><div class="flex items-center flex-1" data-tools="part | greyl s18 c | g doorg door doors algn hair blob rula rulb pac greyl zm v s10 w | g cubes cubes w | g axes bcube s14 c | g bcarr c"></div></div>
<div class="flex shrink-0 h-[26px] border-b border-[#dcdcdc]"><div class="flex items-center w-[441px] shrink-0 pl-px" data-tools="g rsurf trp oarr ggrid"></div><div class="flex items-center flex-1" data-tools="s12 pc1 pc2 pc3 pc4 pc5 v pc6 pc7 v pc8 v pc9 v pca pcb v pcc v w | g swap | sht sht fold band | bsf bsg ~ c"></div></div>
<div class="flex shrink-0 h-[26px] border-b border-[#dcdcdc]"><div class="flex items-center w-[441px] shrink-0 pl-px" data-tools="g bcube v book tube half"></div><div class="flex items-center flex-1" data-tools="s5 yf cedge dome globe w | g tpz rain pac hair blob lay comb strp rula algn cup bfold gfold gg2 | rulb | arcs node c | g gbox c"></div></div>

<!-- selection bar -->
<div class="flex shrink-0 h-[32px] items-center border-b border-[#dcdcdc]">
  <div class="w-[454px] shrink-0 pl-[5px]"><input aria-label="选择过滤器" class="h-5 w-[200px] border border-[#999]"></div>
  <label class="w-[55px] h-5 border border-[#999] flex items-center px-[2px]"><select aria-label="选择范围" class="appearance-none w-0 flex-1 outline-none"><option>全部</option></select><svg class="w-[10px] h-2 mr-1"><use href="#tri"/></svg></label>
  <svg class="w-[18px] h-[18px] ml-[6px]" viewBox="0 0 18 18"><path d="M9 1v10M4 6h10M2 11v3h4M4 12l2 2-2 2M9 16h1M12 16h1M15 16h1" stroke="#999" fill="none"/><circle cx="9" cy="6" r="2" fill="none" stroke="#999"/></svg>
  <span class="h-6 border-l border-[#ddd] mx-[6px]"></span>
  <svg class="w-[18px] h-[18px]" viewBox="0 0 18 18"><path d="M2 3h14v12H2z" stroke="#666" stroke-dasharray="3 2" fill="none"/></svg>
  <span class="w-[15px] flex justify-center"><svg class="w-2 h-[6px]"><use href="#tri"/></svg></span>
  <label class="w-[111px] h-5 border border-[#aaa] flex items-center px-[2px] text-[#999]"><select aria-label="区域" disabled class="appearance-none w-0 flex-1 outline-none"><option>内侧</option></select><svg class="w-[10px] h-2 mr-1"><use href="#tri"/></svg></label>
  <span class="h-6 border-l border-[#ddd] mx-[6px]"></span>
  <svg class="w-[18px] h-[18px]" viewBox="0 0 18 18"><path d="M1 9l4-5 7-1 5 4v6l-5 3-8-1-3-2z" fill="#eee" stroke="#aaa"/><path d="M1 9l7 2 4-5 5 1M8 11v5" stroke="#aaa" fill="none"/></svg>
  <label class="ml-[11px] w-[139px] h-5 border border-[#aaa] flex items-center px-[2px] text-[#999]"><select aria-label="面规则" disabled class="appearance-none w-0 flex-1 outline-none"><option>单个面</option></select><svg class="w-[10px] h-2 mr-1"><use href="#tri"/></svg></label>
</div>
<div class="flex shrink-0 h-[28px] items-center border-b-2 border-[#9a9a9a] pl-[2px] pr-[3px]">
  <div class="flex items-center flex-1" data-tools="g1 g2 g3 g4 comb ~ w"></div>
</div>

<!-- workspace -->
<main class="flex-1 min-h-0 flex">
  <aside class="w-[27px] shrink-0 bg-[#dadada] border-r border-[#999] flex flex-col items-center pt-[3px] overflow-hidden">
    <button type="button" aria-label="设置" class="mr-1 mb-7"><svg class="w-[18px] h-[18px]"><use href="#gear"/></svg></button>
    <div class="flex flex-col gap-4 pl-[3px]" data-side="r1 r2 r3 r4"></div>
    <div class="flex flex-col gap-7 mt-7 pl-[3px]" data-side="r5 r6 r7"></div>
    <div class="flex flex-col gap-4 mt-4 pl-[3px]" data-side="r8 r9"></div>
    <svg class="w-6 h-[80px] shrink-0 mt-1" viewBox="0 0 24 80"><path d="M1 8q6 3 11 0t11-1" stroke="#777" fill="none" stroke-width="1.400"/><path d="M9 21l3-4 3 4zM9 23h6v1H9zM9 36l3-4 3 4z" fill="#aaa"/><path d="M9 48l3 4 3-4zM8 62h8v1H8zM9 65l3 4 3-4z" fill="#222"/></svg>
  </aside>
  <div class="w-[41px] shrink-0 bg-white flex flex-col items-center pl-[2px]">
    <div class="w-[37px] border-b border-r border-[#ddd]" data-palette="plane"></div>
  </div>
  <section class="flex-1 min-w-0 flex bg-linear-to-b from-[#b0b1b2] via-[#d2d3d4] via-45% to-[#e9ebec] to-75%">
    <svg class="flex-1 min-w-0 h-full" viewBox="68 249 820 456" preserveAspectRatio="xMinYMin meet" font-family="Open Sans, sans-serif">
      <path d="M479 385 604 443V627L479 570z" fill="#0000b0"/><path d="M604 443 758 396V580L604 627z" fill="#0000d0"/><path d="M479 385 633 337 758 396 604 443z" fill="#0f0"/>
      <path d="M479 385 633 337 758 396V580L604 627 479 570zM479 385 604 443 758 396M604 443V627" fill="none" stroke="#f0946a"/>
      <path d="M618 420 670.500 405V466L711 486 660.500 502V439L618 420M618 483 680 511M618 483 712 456" fill="none" stroke="#e8e8ff"/>
      <path d="M708 454l15-3-13 8z" fill="#ddd"/>
      <path d="M618.500 360v24" stroke="#00a"/><path d="M618.500 361l4 13h-8z" fill="#00a"/>
      <path d="M618.500 398v85" stroke="#b5642a" stroke-width="3"/><path d="M618.500 384l5 16h-10z" fill="#c87018"/>
      <text x="614" y="358" font-size="12" fill="#004a90">Z</text><text x="724" y="455" font-size="12" fill="#c8c8ff">Y</text><text x="702" y="529" font-size="12" fill="#3838ee">X</text>
      <g><path d="M111 646l11-6 12 4v14l-11 7-12-5zM111 646l12 4v15M123 650l11-6M122 640v15l12 3M122 655l-11 5" fill="#ccc" fill-opacity=".5" stroke="#aaa"/><path d="M110 661l24-6" stroke="#6a6"/><path d="M109.500 660V640" stroke="#12a" stroke-width="2"/><path d="M109.500 633l3 9h-6z" fill="#12a"/><path d="M110 661l12 5" stroke="#b22" stroke-width="2"/><path d="M129 668l-9 0 3-5z" fill="#b22"/><circle cx="109" cy="661" r="3.500" fill="#888"/><circle cx="108" cy="660" r="1.500" fill="#ddd"/>
      <text x="106" y="635" font-size="11" font-style="italic" fill="#26c">Z</text><text x="133" y="658" font-size="11" fill="#5a5">Y</text><text x="127" y="675" font-size="11" fill="#c33">X</text></g>
    </svg>
    <div class="w-[98px] shrink-0 pt-[82px] pr-6 flex flex-col gap-12 text-right text-[14px] leading-[21px] font-['Liberation_Mono',monospace] whitespace-pre">
      <span>&gt; 5.000</span><span>5.000</span><span>0.00</span><span>-5.000</span><span>&lt; -5.000</span>
    </div>
  </section>
  <aside class="w-[38px] shrink-0 bg-white border-r-2 border-[#eee]" data-palette="view"></aside>
</main>

<footer class="h-[23px] shrink-0 border-t border-[#999] flex items-center px-[3px]">
  <span class="text-[11px] font-bold">将 ZC 轴用作矢量</span>
  <svg class="w-[34px] h-[18px] ml-auto mr-[52px]" viewBox="0 0 34 18"><path d="M2 3h12v12H2zM19 3h13v12H19zM5 6l6 6M22 7h7v5h-7z" fill="none" stroke="#999"/></svg>
</footer>

<!-- taskbar -->
<div class="h-10 shrink-0 bg-[#0b0b0b] text-white flex items-stretch">
  <button type="button" aria-label="开始" class="w-12 flex items-center justify-center"><svg class="w-4 h-4" viewBox="0 0 16 16"><path d="M0 2.500 6.500 1.500V7.500H0zM7.500 1.300 16 0V7.500H7.500zM0 8.500H6.500V14.500L0 13.500zM7.500 8.500H16V16L7.500 14.700z" fill="#fff"/></svg></button>
  <label class="w-[320px] bg-[#2c2c2c] flex items-center pl-2 gap-[5px]"><svg class="w-[23px] h-[23px]" viewBox="0 0 23 23"><circle cx="11.500" cy="11.500" r="8.500" fill="none" stroke="#eee" stroke-width="2.600"/></svg><input aria-label="搜索" placeholder="我是 Cortana，小娜。有问题尽管问我。" class="flex-1 w-0 bg-transparent outline-none text-[14px] placeholder:text-[#a0a0a0]"></label>
  <button type="button" aria-label="任务视图" class="w-12 flex items-center justify-center"><svg class="w-5 h-4" viewBox="0 0 20 16"><path d="M5 1h10v14H5zM3 3H1v10h2M17 3h2v10h-2" fill="none" stroke="#ddd" stroke-width="1.300"/></svg></button>
  <button type="button" aria-label="K" class="w-[43px] flex items-center justify-center"><svg class="w-6 h-6" viewBox="0 0 24 24"><circle cx="12" cy="12" r="10.500" fill="#16a0e8" stroke="#e8f6ff" stroke-width="1.500"/><path d="M9 6.500v11M16 7l-6 5 6 5.500" stroke="#fff" stroke-width="2.600" fill="none"/></svg></button>
  <button type="button" class="ml-1 w-[67px] border-b-2 border-[#76b9ed] flex items-center gap-1 pl-[3px] text-[13px]"><svg class="w-[22px] h-[22px]" viewBox="0 0 22 22"><circle cx="11" cy="11" r="10" fill="#4bb52c"/><path d="M6 11h10q0-5-5-5t-5 5 5 5q3 0 4-2" stroke="#fff" stroke-width="2.400" fill="none"/><path d="M1 15Q10 2 21 5" stroke="#f4d83a" stroke-width="1.500" fill="none"/></svg>ug...</button>
  <button type="button" class="ml-[6px] w-[67px] border-b-2 border-[#76b9ed] flex items-center gap-1 pl-[5px] text-[12px] whitespace-nowrap"><svg class="w-[23px] h-5 shrink-0" viewBox="0 0 23 20"><path d="M1 2h8l2 2h11v14H1z" fill="#f7d673"/><path d="M1 7h21v11H1z" fill="#fbe69a"/><path d="M5 18v-5h13v5h-3v-3H8v3z" fill="#3f9fe0"/></svg>文件...</button>
  <button type="button" class="ml-[6px] w-[74px] bg-[#3c3c3c] border-b-2 border-[#76b9ed] flex items-center gap-1 pl-[5px] text-[12px] whitespace-nowrap"><svg class="w-6 h-6 shrink-0" viewBox="0 0 24 24"><path d="M2 4l9 2 2 5-3 4-7-2z" fill="#d8322a"/><path d="M4 12l8-1-1 10-5-2z" fill="#2b84d8"/><path d="M22 3l-9 5-2 13 6-8z" fill="#f5a623"/><path d="M22 3 12 8l1 4 7-3z" fill="#5fb4ee"/><path d="M3 3l10 7-3 2z" fill="#fff"/></svg>黄岩...</button>
  <div class="ml-auto flex items-center text-[12px]">
    <svg class="w-4 h-4 mr-2" viewBox="0 0 16 16"><path d="M3 10l5-5 5 5" stroke="#7cc4ee" stroke-width="1.500" fill="none"/></svg>
    <svg class="w-[18px] h-4 mr-[7px]" viewBox="0 0 18 16"><path d="M5 3h12v8H5zM11 11v3M7 14h8M1 1h3v3H1zM2 4v8h3" stroke="#fff" fill="none" stroke-width="1.200"/></svg>
    <svg class="w-[18px] h-[18px] mr-[6px]" viewBox="0 0 18 18"><circle cx="9" cy="9" r="8" fill="#f3e13a"/><path d="M1 9a8 8 0 0 1 8-8l2 8-2 8a8 8 0 0 1-8-8z" fill="#4cb82e"/><path d="M9 5v8M5 9h8" stroke="#111" stroke-width="2"/></svg>
    <svg class="w-[18px] h-4 mr-[6px]" viewBox="0 0 18 16"><path d="M1 6h3l4-4v12l-4-4H1zM10 5q2 3 0 6M12 3q4 5 0 10M15 1q5 7 0 14" stroke="#fff" fill="none"/></svg>
    <svg class="w-[18px] h-4 mr-[6px]" viewBox="0 0 18 16"><path d="M1 1h16v11h-5l-3 3-1-3H1z" fill="#fff"/><path d="M4 4h10M4 6.500h10M4 9h7" stroke="#222"/></svg>
    <svg class="w-4 h-4 mr-[13px]" viewBox="0 0 16 16"><circle cx="8" cy="8" r="7" fill="#555"/><path d="M5 5l6 6M11 5l-6 6" stroke="#ccc" stroke-width="1.500"/></svg>
    <svg class="w-[14px] h-[14px] mr-6" viewBox="0 0 14 14"><path d="M0 0h14v14H0z" fill="#fff"/><circle cx="7" cy="6.500" r="4" fill="none" stroke="#111" stroke-width="1.600"/><path d="M8 8l3 4" stroke="#111" stroke-width="1.600"/></svg>
    <time class="self-end mb-1 mr-[13px]">2016/3/8</time>
    <span class="h-full border-l border-[#555] mr-[3px]"></span>
  </div>
</div>

<!-- draft analysis dialog -->
<form class="absolute left-[107px] top-[56px] w-[345px] bg-[#e7e7e7] border border-[#b4bcc0] flex flex-col" onsubmit="return false">
  <div class="h-6 -mx-px -mt-px bg-[#5c8983] text-white flex items-center px-[7px] gap-2 text-[13px]">
    <svg class="w-4 h-4"><use href="#gear"/></svg><h2>拔模分析</h2>
    <button type="button" aria-label="重置" class="ml-auto"><svg class="w-[14px] h-[14px]" viewBox="0 0 14 14"><path d="M8 2a5 5 0 1 1-6 5" stroke="#fff" stroke-width="2" fill="none"/><path d="M0 8l1-5 5 3z" fill="#fff"/></svg></button>
    <button type="button" aria-label="关闭"><svg class="w-3 h-3" viewBox="0 0 12 12"><path d="M1 1l10 10M11 1 1 11" stroke="#fff" stroke-width="2"/></svg></button>
  </div>
  <div class="mt-1 ml-[5px] mr-[6px] h-[385px] flex">
    <div class="flex-1 overflow-hidden flex flex-col gap-1 text-black">
      <section class="bg-white border-b border-[#c4c4c4] h-[97px] shrink-0 pr-[10px] pl-[9px]">
        <div class="h-[30px] flex items-center justify-between text-[#3a86a8] -ml-[2px] -mr-[3px] pb-1"><h3 class="text-[14px]">目标</h3><svg class="w-3 h-3 text-[#2f84a6]"><use href="#up"/></svg></div>
        <div class="h-8 flex items-center gap-[5px]"><svg class="w-[14px] h-[14px]"><use href="#chk"/></svg><span>选择面或小平面体 (6)</span>
          <button type="button" aria-label="选择对象" class="ml-auto w-8 h-8 border border-[#999] flex items-center justify-center"><svg class="w-5 h-5" viewBox="0 0 20 20"><circle cx="10" cy="10" r="5" fill="none" stroke="#c33" stroke-width="1.500"/><path d="M10 1v18M1 10h18" stroke="#000"/></svg></button></div>
        <button type="button" class="mt-[2px] w-full h-6 bg-[#f1f5f7] border border-[#d4dadc] flex items-center justify-between px-[7px] text-[#3a86a8]"><span>法向</span><svg class="w-[11px] h-[11px]"><use href="#dn"/></svg></button>
      </section>
      <section class="bg-white border-b border-[#c4c4c4] h-[127px] shrink-0 pr-[10px] pl-[9px]">
        <div class="h-[29px] flex items-center justify-between text-[#3a86a8] -ml-[2px] -mr-[3px] pb-[3px]"><h3 class="text-[14px]">脱模方向</h3><svg class="w-3 h-3 text-[#2f84a6]"><use href="#up"/></svg></div>
        <div class="h-8 bg-[#f1f5f7] border border-[#d8dcde] flex items-center pl-1">
          <label class="flex items-center gap-[5px]"><input type="radio" name="dir" checked class="appearance-none w-[13px] h-[13px] rounded-full border border-[#333] bg-white checked:bg-[#222] checked:shadow-[inset_0_0_0_2px_white]">矢量</label>
          <label class="flex items-center gap-[6px] ml-[14px]"><input type="radio" name="dir" class="appearance-none w-[13px] h-[13px] rounded-full border border-[#333] bg-white">方向</label>
        </div>
        <div class="mt-px h-8 flex items-center gap-[2px]">
          <div class="flex-1 h-8 bg-[#fbd66f] flex items-center gap-[5px]"><svg class="w-[14px] h-[14px]"><use href="#chk"/></svg>指定矢量</div>
          <button type="button" aria-label="反向" class="w-6 h-6 border border-[#999] flex items-center justify-center"><svg class="w-[18px] h-[18px]" viewBox="0 0 18 18"><path d="M4 4l12 12" stroke="#222"/><path d="M3 15 15 3" stroke="#12a" stroke-width="1.500" stroke-dasharray="6 4"/><path d="M10 3h5v5zM3 10v5h5z" fill="#12a"/></svg></button>
          <button type="button" aria-label="矢量对话框" class="w-6 h-6 border border-[#999] flex items-center justify-center"><svg class="w-[18px] h-[18px]" viewBox="0 0 18 18"><path d="M9 13V3" stroke="#c33" stroke-width="1.500"/><path d="M9 1l2 4H7z" fill="#c22"/><path d="M2 9q-1 5 4 5M5 11l3 3-3 2" stroke="#e90" fill="none" stroke-width="1.600"/><path d="M9 16h2M12 16h2M15 16h2" stroke="#111" stroke-width="2"/></svg></button>
          <button type="button" class="w-[49px] h-8 bg-[#fbe8a6] border border-[#ead58a] flex text-[12px] leading-4"><span class="pl-[3px] pt-px">ZC</span><svg class="w-[9px] h-[22px] self-end" viewBox="0 0 9 22"><path d="M4.500 20V4" stroke="#126" stroke-width="1.500"/><path d="M4.500 0l3 9h-6z" fill="#24c"/></svg><span class="ml-auto w-[17px] h-full border-l border-[#ead58a] flex items-center justify-center text-[#666]"><svg class="w-[7px] h-[6px]"><use href="#tri"/></svg></span></button>
        </div>
        <label class="h-[26px] flex items-center gap-[5px]"><input type="checkbox" class="appearance-none w-[13px] h-[13px] border border-[#333] bg-white">显示分型线</label>
      </section>
      <section class="bg-white h-[190px] shrink-0 pr-[10px] pl-[9px]">
        <div class="h-[28px] flex items-center justify-between text-[#3a86a8] -ml-[2px] -mr-[3px] pb-1"><h3 class="text-[14px]">正向拔模</h3><svg class="w-3 h-3 text-[#2f84a6]"><use href="#up"/></svg></div>
        <div class="h-6 flex items-center"><label for="limit" class="flex-1">限制角度</label>
          <input type="range" aria-label="限制角度滑块" value="18" class="appearance-none w-[66px] h-[22px] mr-[10px] bg-transparent [&::-webkit-slider-runnable-track]:h-1 [&::-webkit-slider-runnable-track]:bg-[#b0b0b0] [&::-webkit-slider-thumb]:appearance-none [&::-webkit-slider-thumb]:w-[11px] [&::-webkit-slider-thumb]:h-[22px] [&::-webkit-slider-thumb]:-mt-[9px] [&::-webkit-slider-thumb]:bg-[#a3bdb9] [&::-webkit-slider-thumb]:border [&::-webkit-slider-thumb]:border-[#466]">
          <input id="limit" value="5.00000" class="w-[82px] h-[23px] border border-[#aaa] pl-[21px] outline-none text-[15px] font-['Liberation_Mono',monospace]"></div>
        <label class="mt-px h-6 flex items-center"><input type="checkbox" checked class="sr-only"><svg class="w-[13px] h-[13px] border border-[#333]" viewBox="0 0 13 13"><path d="M2.500 6l3 3.500L11 3" fill="none" stroke="#333" stroke-width="1.300"/></svg><svg class="w-3 h-4 ml-3 mr-[2px]" viewBox="0 0 12 16"><path d="M3 8V4q0-3 3-3t3 3v4" fill="none" stroke="#b8860b" stroke-width="1.800"/><rect x="1" y="7" width="10" height="8" rx="1" fill="#f4c430" stroke="#a87a10"/><path d="M3 9h6v3H3z" fill="#fbe38a"/></svg>耦合限制</label>
        <label class="h-6 flex items-center gap-[5px]"><input type="checkbox" class="appearance-none w-[13px] h-[13px] border border-[#333] bg-white">显示等斜线</label>
        <div class="h-[21px] flex items-center justify-between pl-[101px]"><span>透明度</span><span>颜色</span></div>
        <div class="h-6 flex items-center"><label for="outer" class="flex-1 pb-px">外部</label>
          <input id="outer" type="range" value="0" class="appearance-none w-[66px] h-[22px] mr-[10px] bg-transparent [&::-webkit-slider-runnable-track]:h-1 [&::-webkit-slider-runnable-track]:bg-[#b0b0b0] [&::-webkit-slider-thumb]:appearance-none [&::-webkit-slider-thumb]:w-[11px] [&::-webkit-slider-thumb]:h-[22px] [&::-webkit-slider-thumb]:-mt-[9px] [&::-webkit-slider-thumb]:bg-[#a3bdb9] [&::-webkit-slider-thumb]:border [&::-webkit-slider-thumb]:border-[#466]">
          <input aria-label="外部透明度" value="0" class="w-[82px] h-[23px] border border-[#aaa] pr-[6px] text-right outline-none text-[15px] font-['Liberation_Mono',monospace]">
          <button type="button" aria-label="外部颜色" class="ml-[9px] w-5 h-5 bg-[#0f0] border border-[#555]"></button></div>
        <div class="mt-[3px] h-6 flex items-center justify-end"><span class="w-[11px] h-[22px] mr-[65px] bg-[#a3bdb9] border border-[#466]"></span><span class="w-[82px] h-[23px] border border-[#aaa]"></span><button type="button" aria-label="内部颜色" class="ml-[9px] w-5 h-6 bg-[#f6f07a] border border-[#555]"></button></div>
      </section>
    </div>
    <div class="w-[15px] shrink-0 bg-[#f0f0f0] flex flex-col" aria-hidden="true">
      <span class="h-[17px] flex items-center justify-center text-[#555]"><svg class="w-[9px] h-[9px]" viewBox="0 0 9 9"><path d="M1 6l3.500-4L8 6" stroke="currentColor" fill="none" stroke-width="1.800"/></svg></span>
      <span class="h-[179px] bg-[#c1c1c1]"></span>
      <span class="mt-auto h-[17px] bg-[#dadada] flex items-center justify-center text-black"><svg class="w-[9px] h-[9px]" viewBox="0 0 9 9"><path d="M1 3l3.500 4L8 3" stroke="currentColor" fill="none" stroke-width="2"/></svg></span>
    </div>
  </div>
  <div class="pt-2 pb-[10px] pr-[15px] flex justify-end gap-[5px]">
    <button class="w-[54px] h-[25px] bg-[#cccdd0] border border-[#aaa]">确定</button>
    <button class="w-[54px] h-[25px] bg-[#98cde6] border border-[#6fa5c0]">应用</button>
    <button class="w-[54px] h-[25px] bg-[#cccdd0] border border-[#aaa]">取消</button>
  </div>
</form>

<!-- site mark floating over the corner -->
<svg class="absolute right-0 bottom-0 w-[304px] h-[108px] pointer-events-none" viewBox="720 660 304 108">
  <g opacity=".93"><path d="M765 668 806 691V738L765 761 724 738V691z" fill="#3f86c4" stroke="#f4f9fd" stroke-width="3" stroke-linejoin="round"/>
  <path d="M765 669 806 692 806 715Q803 690 783 682Q775 672 765 669z" fill="#6cc4ec"/><path d="M725 692 765 669Q788 676 785 698L765 688 746 699Q733 703 725 715z" fill="#5e97d0"/>
  <path d="M806 714V738L765 760Q748 752 743 738L765 743 786 729Q800 712 783 683 804 692 806 714z" fill="#5bbbe6"/><path d="M725 715Q733 702 746 701V733Q747 750 765 760L725 738z" fill="#2560a4"/><path d="M746 733Q768 756 804 738L765 760Q750 755 746 733z" fill="#1d7aa8"/>
  <path d="M785 698Q788 676 765 669M725 715Q733 701 747 701M746 733Q747 750 765 760M786 730Q806 715 800 695" fill="none" stroke="#cfe6f6"/>
  <path d="M765 688 786 700V731L765 744 744 731V700z" fill="#fff"/><path d="M765 693 783 703 765 713 747 703z" fill="#5f9bd8"/><path d="M747 705 764 714V735L747 726z" fill="#6fa3dc"/><path d="M783 705 766 714V735L783 726z" fill="#6cc4ee"/></g>
  <g opacity=".9" fill="#62bfe9" stroke="#f2f9fd" paint-order="stroke" stroke-linejoin="round" font-weight="bold"><text x="816" y="721" font-size="46" stroke-width="5" font-family="Noto Sans CJK SC, sans-serif">3D世界网</text><text x="818" y="743" font-size="19" stroke-width="2" fill="#55b0e0" font-family="DejaVu Sans, sans-serif">WWW.3DSJW.COM</text></g>
</svg>

<script>
const tri = '<svg class="w-2 h-[6px]"><use href="#tri"/></svg>';
const fixed = {
  '|': '<span class="w-[5px] h-5 shrink-0 flex justify-center"><i class="border-l border-[#d4d4d4]"></i></span>',
  'g': '<span class="w-[6px] h-[22px] shrink-0 flex justify-center"><i class="border-l-2 border-dotted border-[#b4b4b4]"></i></span>',
  'v': `<button type="button" aria-label="更多" class="w-3 shrink-0 flex justify-center">${tri}</button>`,
  'w': `<button type="button" aria-label="工具条选项" class="w-3 h-[18px] shrink-0 flex items-end justify-center">${tri}</button>`,
  'c': `<button type="button" aria-label="展开" class="w-[14px] shrink-0 flex flex-col items-center gap-[3px]"><svg class="w-[9px] h-[6px]" viewBox="0 0 9 6"><path d="M1 0l3 3-3 3M5 0l3 3-3 3" stroke="#111" fill="none" stroke-width="1.300"/></svg>${tri}</button>`,
  '~': '<span class="flex-1"></span>',
  's3': '<span class="w-[3px] shrink-0"></span>', 's5': '<span class="w-[5px] shrink-0"></span>',
  's10': '<span class="w-[10px] shrink-0"></span>', 's12': '<span class="w-3 shrink-0"></span>', 's14': '<span class="w-[14px] shrink-0"></span>', 's18': '<span class="w-[18px] shrink-0"></span>'
};
const tool = n => n[0] === '!'
  ? `<button type="button" aria-label="${n.slice(1)}" aria-pressed="true" class="w-[23px] h-[23px] shrink-0 flex items-center justify-center bg-[#c7d8d5] border border-[#a3bbb7]"><svg class="w-[18px] h-[18px]"><use href="#${n.slice(1)}"/></svg></button>`
  : `<button type="button" aria-label="${n}" class="w-[23px] h-[18px] shrink-0 flex justify-center"><svg class="w-[18px] h-[18px] shrink-0"><use href="#${n}"/></svg></button>`;
document.querySelectorAll('[data-tools]').forEach(e => e.innerHTML = e.dataset.tools.split(' ').map(t => fixed[t] || tool(t)).join(''));
document.querySelectorAll('[data-side]').forEach(e => e.innerHTML = e.dataset.side.split(' ').map(n => `<button type="button" aria-label="${n}"><svg class="w-[18px] h-[18px]"><use href="#${n}"/></svg></button>`).join(''));
const rowA = n => `<div class="h-[23px] flex items-center pl-1"><button type="button" aria-label="${n}"><svg class="w-[18px] h-[18px]"><use href="#${n}"/></svg></button><span class="ml-1">${tri}</span></div>`;
const rowB = n => `<div class="h-[23px] flex items-center justify-center">${tool(n)}</div>`;
const hr = '<div class="h-[6px] flex flex-col justify-center mx-[3px]"><i class="border-t border-[#ccc]"></i></div>';
const grip = '<div class="h-3 flex flex-col justify-center mx-[2px]"><i class="border-t-2 border-dotted border-[#b4b4b4]"></i></div>';
document.querySelector('[data-palette=plane]').innerHTML = grip + rowA('pln') + hr + rowB('tex') + rowA('ucrv') + ['circ','flt','rect','plus'].map(rowB).join('') + hr + rowA('p1') + hr + rowA('p2') + hr + rowB('p3') + hr + ['book','q2','q3','q4','q5'].map(rowA).join('') + '<div class="h-[14px] pl-[3px]"><svg class="w-2 h-3" viewBox="0 0 8 12"><path d="M6 3v6L3 6z"/></svg></div>';
document.querySelector('[data-palette=view]').innerHTML = '<div class="h-[7px] flex flex-col justify-center mx-[3px]"><i class="border-t-2 border-dotted border-[#b4b4b4]"></i></div>' + ['v1','v2','v3','v4','v5','v6','!v7','v8','v9','va'].map(rowB).join('') + `<div class="h-[23px] flex items-center pl-[3px]">${tool('vb')}${tri}</div>` + ['vc','vd','ve','vf','vg'].map(rowB).join('') + hr + rowB('vh') + hr + rowB('vi') + '<div class="h-[26px] flex items-end justify-between px-1"><svg class="w-2 h-3" viewBox="0 0 8 12"><path d="M6 3v6L3 6z"/></svg><svg class="w-2 h-3" viewBox="0 0 8 12"><path d="M1 2l3 3 3-3M1 6l3 3 3-3" stroke="#333" fill="none"/></svg></div>';
document.querySelector('[data-menu]').innerHTML = [['文件','F'],['编辑','E'],['视图','V'],0,['插入','S'],['格式','R'],0,['工具','T'],['装配','A'],['信息','I'],['分析','L'],1,['首选项','P'],['窗口','O'],['GC工具箱'],['帮助','H'],['HB_MOULD M6.7']].map(m => m === 0 ? '<i class="border-l border-[#d8e6e3] mr-[6px]"></i>' : m === 1 ? '<i class="w-2"></i>' : `<button type="button" class="mr-[11px] whitespace-nowrap">${m[0]}${m[1] ? `(<u>${m[1]}</u>)` : ''}</button>`).join('');
document.querySelectorAll('[data-win]').forEach(e => e.innerHTML = '<button type="button" aria-label="最小化"><svg class="w-3 h-3" viewBox="0 0 12 12"><path d="M2 11h8" stroke="currentColor" stroke-width="2"/></svg></button><button type="button" aria-label="还原"><svg class="w-3 h-3" viewBox="0 0 12 12"><path d="M3.500 4V1.500h8v5H9M.5 4.500h8v6h-8z" fill="none" stroke="currentColor" stroke-width="1.300"/></svg></button><button type="button" aria-label="关闭"><svg class="w-3 h-3" viewBox="0 0 12 12"><path d="M1 1l10 10M11 1 1 11" stroke="currentColor" stroke-width="1.700"/></svg></button>');
</script>
</body>
</html>
